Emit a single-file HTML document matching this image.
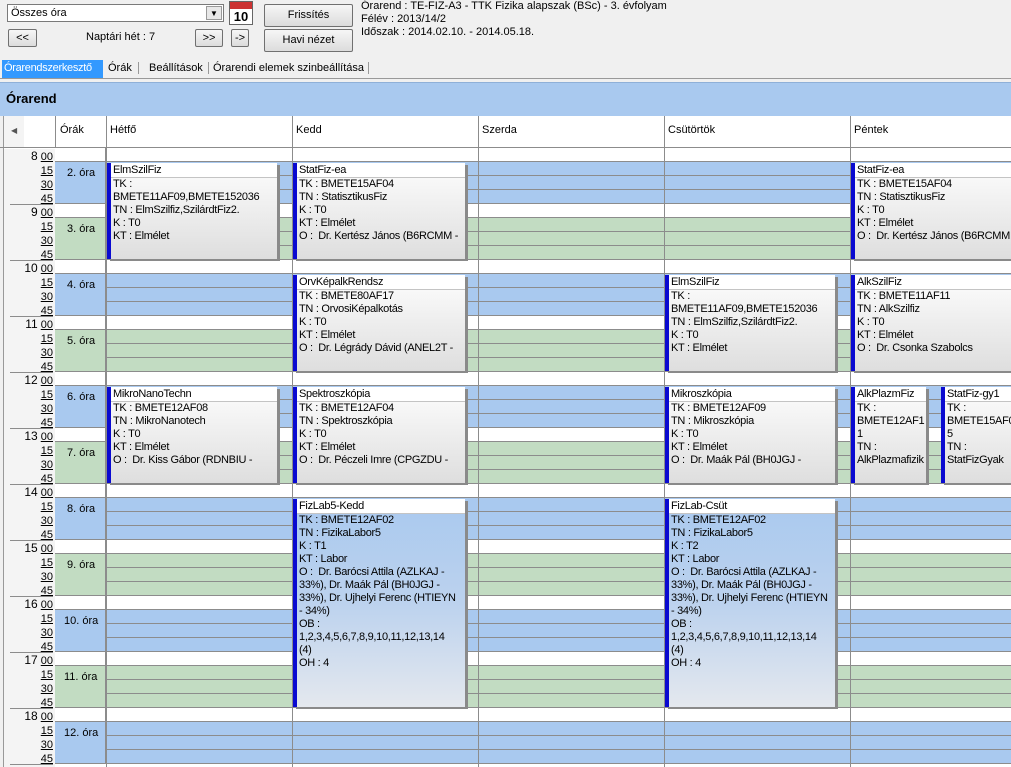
<!DOCTYPE html>
<html><head><meta charset="utf-8">
<style>
*{margin:0;padding:0;box-sizing:border-box}
body{width:1011px;height:767px;overflow:hidden;background:#f0f0f0;font-family:"Liberation Sans",sans-serif;font-size:11px;color:#000;position:relative}
.a{position:absolute}
.btn{position:absolute;background:linear-gradient(#f6f6f6,#dcdcdc);border:1px solid #707070;border-radius:2px;text-align:center;font-size:11px}
.hr{position:absolute;left:106px;width:905px;height:56px}
.w{height:14px;background:#fff;border-bottom:1px solid #8c8c8c}
.b .c{height:14px;background:#a9c9ef;border-bottom:1px solid #8c8c8c}
.g .c{height:14px;background:#c2dcc2;border-bottom:1px solid #8c8c8c}
.vl{position:absolute;top:116px;height:651px;width:1px;background:#8c8c8c}
.ev{position:absolute;border-left:4px solid #0a0ad0;box-shadow:3px 2px 0 #8a8a8a;background:linear-gradient(#fdfdfd,#dedede);line-height:13px;overflow:hidden;white-space:nowrap;letter-spacing:-0.3px}
.ev .t{background:#fff;height:15px;border-bottom:1px solid #c4c4c4;padding:1px 3px 0 2px}
.ev .bd{padding:0 2px;white-space:normal}
.bl{background:linear-gradient(#a9c9ef 0%,#bcd2ee 50%,#e4e8ee 100%)}
.ora{position:absolute;left:55px;width:51px;border-right:1px solid #8c8c8c}
.tl div{height:56px;border-bottom:1px solid #8c8c8c;margin-left:6px}
.tl span{font-size:12px}
</style></head><body>
<!-- top -->
<div class="a" style="left:7px;top:4px;width:217px;height:18px;background:#fff;border:1px solid #7a7a7a;padding:2px 3px">Összes óra</div>
<div class="a" style="left:206px;top:6px;width:16px;height:14px;background:#e8e8e8;border:1px solid #999;font-size:8px;text-align:center;line-height:14px">▼</div>
<div class="a" style="left:229px;top:1px;width:24px;height:24px;background:#fff;border:1px solid #666"><div style="height:7px;background:#c33"></div><div style="font-weight:bold;font-size:13px;text-align:center;line-height:15px">10</div></div>
<div class="btn" style="left:8px;top:29px;width:29px;height:18px;line-height:16px">&lt;&lt;</div>
<div class="a" style="left:86px;top:31px">Naptári hét : 7</div>
<div class="btn" style="left:195px;top:29px;width:28px;height:18px;line-height:16px">&gt;&gt;</div>
<div class="btn" style="left:231px;top:29px;width:18px;height:18px;line-height:16px">-&gt;</div>
<div class="btn" style="left:264px;top:4px;width:89px;height:23px;line-height:21px">Frissítés</div>
<div class="btn" style="left:264px;top:29px;width:89px;height:23px;line-height:21px">Havi nézet</div>
<div class="a" style="left:361px;top:0px;line-height:13px">Órarend : TE-FIZ-A3 - TTK Fizika alapszak (BSc) - 3. évfolyam<br>Félév : 2013/14/2<br>Időszak : 2014.02.10. - 2014.05.18.</div>
<!-- tabs -->
<div class="a" style="left:2px;top:60px;width:101px;height:18px;background:#3399ff;color:#fff;padding:2px 2px;letter-spacing:-0.3px">Órarendszerkesztő</div>
<div class="a" style="left:108px;top:62px">Órák</div>
<div class="a" style="left:138px;top:62px;border-left:1px solid #999;padding-left:10px">Beállítások</div>
<div class="a" style="left:208px;top:62px;border-left:1px solid #999;padding-left:4px;border-right:1px solid #999;padding-right:4px">Órarendi elemek szinbeállítása</div>
<div class="a" style="left:0;top:78px;width:1011px;height:1px;background:#999"></div>
<!-- title -->
<div class="a" style="left:0;top:82px;width:1011px;height:34px;background:#a9c9ef;border-top:1px solid #8fb0d8"></div>
<div class="a" style="left:6px;top:91px;font-weight:bold;font-size:13px">Órarend</div>
<!-- grid bg -->
<div class="a" style="left:3px;top:116px;width:1008px;height:651px;background:#fff;border-left:1px solid #999"></div>
<div class="a" style="left:4px;top:149px;width:51px;height:618px;background:#f4f4f4"></div>
<div class="a" style="left:4px;top:116px;width:20px;height:32px;background:#f4f4f4;font-size:8px;color:#555;padding:10px 0 0 7px">◀</div>
<div class="a" style="left:0;top:147px;width:1011px;height:1px;background:#8c8c8c"></div>
<div class="a" style="left:60px;top:124px">Órák</div>
<div class="a" style="left:110px;top:124px">Hétfő</div>
<div class="a" style="left:296px;top:124px">Kedd</div>
<div class="a" style="left:482px;top:124px">Szerda</div>
<div class="a" style="left:668px;top:124px">Csütörtök</div>
<div class="a" style="left:854px;top:124px">Péntek</div>

<!-- hour rows -->
<div class="hr b" style="top:148px"><div class="w"></div><div class="c"></div><div class="c"></div><div class="c"></div></div>
<div class="hr g" style="top:204px"><div class="w"></div><div class="c"></div><div class="c"></div><div class="c"></div></div>
<div class="hr b" style="top:260px"><div class="w"></div><div class="c"></div><div class="c"></div><div class="c"></div></div>
<div class="hr g" style="top:316px"><div class="w"></div><div class="c"></div><div class="c"></div><div class="c"></div></div>
<div class="hr b" style="top:372px"><div class="w"></div><div class="c"></div><div class="c"></div><div class="c"></div></div>
<div class="hr g" style="top:428px"><div class="w"></div><div class="c"></div><div class="c"></div><div class="c"></div></div>
<div class="hr b" style="top:484px"><div class="w"></div><div class="c"></div><div class="c"></div><div class="c"></div></div>
<div class="hr g" style="top:540px"><div class="w"></div><div class="c"></div><div class="c"></div><div class="c"></div></div>
<div class="hr b" style="top:596px"><div class="w"></div><div class="c"></div><div class="c"></div><div class="c"></div></div>
<div class="hr g" style="top:652px"><div class="w"></div><div class="c"></div><div class="c"></div><div class="c"></div></div>
<div class="hr b" style="top:708px"><div class="w"></div><div class="c"></div><div class="c"></div><div class="c"></div></div>

<!-- ora column -->
<div class="ora" style="top:148px;height:14px;background:#fff;border-bottom:1px solid #8c8c8c"></div>
<div class="ora" style="top:162px;height:42px;background:#a9c9ef;border-bottom:1px solid #8c8c8c;padding:5px 0 0 12px">2. óra</div>
<div class="ora" style="top:204px;height:14px;background:#fff;border-bottom:1px solid #8c8c8c"></div>
<div class="ora" style="top:218px;height:42px;background:#c2dcc2;border-bottom:1px solid #8c8c8c;padding:5px 0 0 12px">3. óra</div>
<div class="ora" style="top:260px;height:14px;background:#fff;border-bottom:1px solid #8c8c8c"></div>
<div class="ora" style="top:274px;height:42px;background:#a9c9ef;border-bottom:1px solid #8c8c8c;padding:5px 0 0 12px">4. óra</div>
<div class="ora" style="top:316px;height:14px;background:#fff;border-bottom:1px solid #8c8c8c"></div>
<div class="ora" style="top:330px;height:42px;background:#c2dcc2;border-bottom:1px solid #8c8c8c;padding:5px 0 0 12px">5. óra</div>
<div class="ora" style="top:372px;height:14px;background:#fff;border-bottom:1px solid #8c8c8c"></div>
<div class="ora" style="top:386px;height:42px;background:#a9c9ef;border-bottom:1px solid #8c8c8c;padding:5px 0 0 12px">6. óra</div>
<div class="ora" style="top:428px;height:14px;background:#fff;border-bottom:1px solid #8c8c8c"></div>
<div class="ora" style="top:442px;height:42px;background:#c2dcc2;border-bottom:1px solid #8c8c8c;padding:5px 0 0 12px">7. óra</div>
<div class="ora" style="top:484px;height:14px;background:#fff;border-bottom:1px solid #8c8c8c"></div>
<div class="ora" style="top:498px;height:42px;background:#a9c9ef;border-bottom:1px solid #8c8c8c;padding:5px 0 0 12px">8. óra</div>
<div class="ora" style="top:540px;height:14px;background:#fff;border-bottom:1px solid #8c8c8c"></div>
<div class="ora" style="top:554px;height:42px;background:#c2dcc2;border-bottom:1px solid #8c8c8c;padding:5px 0 0 12px">9. óra</div>
<div class="ora" style="top:596px;height:14px;background:#fff;border-bottom:1px solid #8c8c8c"></div>
<div class="ora" style="top:610px;height:42px;background:#a9c9ef;border-bottom:1px solid #8c8c8c;padding:5px 0 0 9px">10. óra</div>
<div class="ora" style="top:652px;height:14px;background:#fff;border-bottom:1px solid #8c8c8c"></div>
<div class="ora" style="top:666px;height:42px;background:#c2dcc2;border-bottom:1px solid #8c8c8c;padding:5px 0 0 9px">11. óra</div>
<div class="ora" style="top:708px;height:14px;background:#fff;border-bottom:1px solid #8c8c8c"></div>
<div class="ora" style="top:722px;height:42px;background:#a9c9ef;border-bottom:1px solid #8c8c8c;padding:5px 0 0 9px">12. óra</div>

<!-- time labels -->
<div class="a tl" style="left:4px;top:149px;width:49px;height:618px;line-height:14px;text-align:right;font-size:11px">
<div><span>8</span> <u>00</u><br><u>15</u><br><u>30</u><br><u>45</u></div>
<div><span>9</span> <u>00</u><br><u>15</u><br><u>30</u><br><u>45</u></div>
<div><span>10</span> <u>00</u><br><u>15</u><br><u>30</u><br><u>45</u></div>
<div><span>11</span> <u>00</u><br><u>15</u><br><u>30</u><br><u>45</u></div>
<div><span>12</span> <u>00</u><br><u>15</u><br><u>30</u><br><u>45</u></div>
<div><span>13</span> <u>00</u><br><u>15</u><br><u>30</u><br><u>45</u></div>
<div><span>14</span> <u>00</u><br><u>15</u><br><u>30</u><br><u>45</u></div>
<div><span>15</span> <u>00</u><br><u>15</u><br><u>30</u><br><u>45</u></div>
<div><span>16</span> <u>00</u><br><u>15</u><br><u>30</u><br><u>45</u></div>
<div><span>17</span> <u>00</u><br><u>15</u><br><u>30</u><br><u>45</u></div>
<div><span>18</span> <u>00</u><br><u>15</u><br><u>30</u><br><u>45</u></div>
</div>

<!-- vertical lines -->
<div class="vl" style="left:55px;top:116px;height:32px"></div>
<div class="vl" style="left:106px"></div>
<div class="vl" style="left:292px"></div>
<div class="vl" style="left:478px"></div>
<div class="vl" style="left:664px"></div>
<div class="vl" style="left:850px"></div>

<!-- events -->
<div class="ev" style="left:107px;top:163px;width:170px;height:96px"><div class="t">ElmSzilFiz</div><div class="bd">TK :<br>BMETE11AF09,BMETE152036<br>TN : ElmSzilfiz,SzilárdtFiz2.<br>K : T0<br>KT : Elmélet</div></div>
<div class="ev" style="left:293px;top:163px;width:172px;height:96px"><div class="t">StatFiz-ea</div><div class="bd" style="white-space:nowrap">TK : BMETE15AF04<br>TN : StatisztikusFiz<br>K : T0<br>KT : Elmélet<br>O :&nbsp; Dr. Kertész János (B6RCMM -</div></div>
<div class="ev" style="left:851px;top:163px;width:165px;height:96px"><div class="t">StatFiz-ea</div><div class="bd" style="white-space:nowrap">TK : BMETE15AF04<br>TN : StatisztikusFiz<br>K : T0<br>KT : Elmélet<br>O :&nbsp; Dr. Kertész János (B6RCMM -</div></div>

<div class="ev" style="left:293px;top:275px;width:172px;height:96px"><div class="t">OrvKépalkRendsz</div><div class="bd" style="white-space:nowrap">TK : BMETE80AF17<br>TN : OrvosiKépalkotás<br>K : T0<br>KT : Elmélet<br>O :&nbsp; Dr. Légrády Dávid (ANEL2T -</div></div>
<div class="ev" style="left:665px;top:275px;width:170px;height:96px"><div class="t">ElmSzilFiz</div><div class="bd">TK :<br>BMETE11AF09,BMETE152036<br>TN : ElmSzilfiz,SzilárdtFiz2.<br>K : T0<br>KT : Elmélet</div></div>
<div class="ev" style="left:851px;top:275px;width:165px;height:96px"><div class="t">AlkSzilFiz</div><div class="bd">TK : BMETE11AF11<br>TN : AlkSzilfiz<br>K : T0<br>KT : Elmélet<br>O :&nbsp; Dr. Csonka Szabolcs</div></div>

<div class="ev" style="left:107px;top:387px;width:170px;height:96px"><div class="t">MikroNanoTechn</div><div class="bd" style="white-space:nowrap">TK : BMETE12AF08<br>TN : MikroNanotech<br>K : T0<br>KT : Elmélet<br>O :&nbsp; Dr. Kiss Gábor (RDNBIU -</div></div>
<div class="ev" style="left:293px;top:387px;width:172px;height:96px"><div class="t">Spektroszkópia</div><div class="bd" style="white-space:nowrap">TK : BMETE12AF04<br>TN : Spektroszkópia<br>K : T0<br>KT : Elmélet<br>O :&nbsp; Dr. Péczeli Imre (CPGZDU -</div></div>
<div class="ev" style="left:665px;top:387px;width:170px;height:96px"><div class="t">Mikroszkópia</div><div class="bd" style="white-space:nowrap">TK : BMETE12AF09<br>TN : Mikroszkópia<br>K : T0<br>KT : Elmélet<br>O :&nbsp; Dr. Maák Pál (BH0JGJ -</div></div>
<div class="ev" style="left:851px;top:387px;width:75px;height:96px"><div class="t">AlkPlazmFiz</div><div class="bd">TK :<br>BMETE12AF1<br>1<br>TN :<br>AlkPlazmafizik</div></div>
<div class="ev" style="left:941px;top:387px;width:75px;height:96px"><div class="t">StatFiz-gy1</div><div class="bd">TK :<br>BMETE15AF0<br>5<br>TN :<br>StatFizGyak</div></div>

<div class="ev bl" style="left:293px;top:499px;width:172px;height:208px"><div class="t">FizLab5-Kedd</div><div class="bd">TK : BMETE12AF02<br>TN : FizikaLabor5<br>K : T1<br>KT : Labor<br>O :&nbsp; Dr. Barócsi Attila (AZLKAJ -<br>33%), Dr. Maák Pál (BH0JGJ -<br>33%), Dr. Ujhelyi Ferenc (HTIEYN<br>- 34%)<br>OB :<br>1,2,3,4,5,6,7,8,9,10,11,12,13,14<br>(4)<br>OH : 4</div></div>
<div class="ev bl" style="left:665px;top:499px;width:170px;height:208px"><div class="t">FizLab-Csüt</div><div class="bd">TK : BMETE12AF02<br>TN : FizikaLabor5<br>K : T2<br>KT : Labor<br>O :&nbsp; Dr. Barócsi Attila (AZLKAJ -<br>33%), Dr. Maák Pál (BH0JGJ -<br>33%), Dr. Ujhelyi Ferenc (HTIEYN<br>- 34%)<br>OB :<br>1,2,3,4,5,6,7,8,9,10,11,12,13,14<br>(4)<br>OH : 4</div></div>
</body></html>
